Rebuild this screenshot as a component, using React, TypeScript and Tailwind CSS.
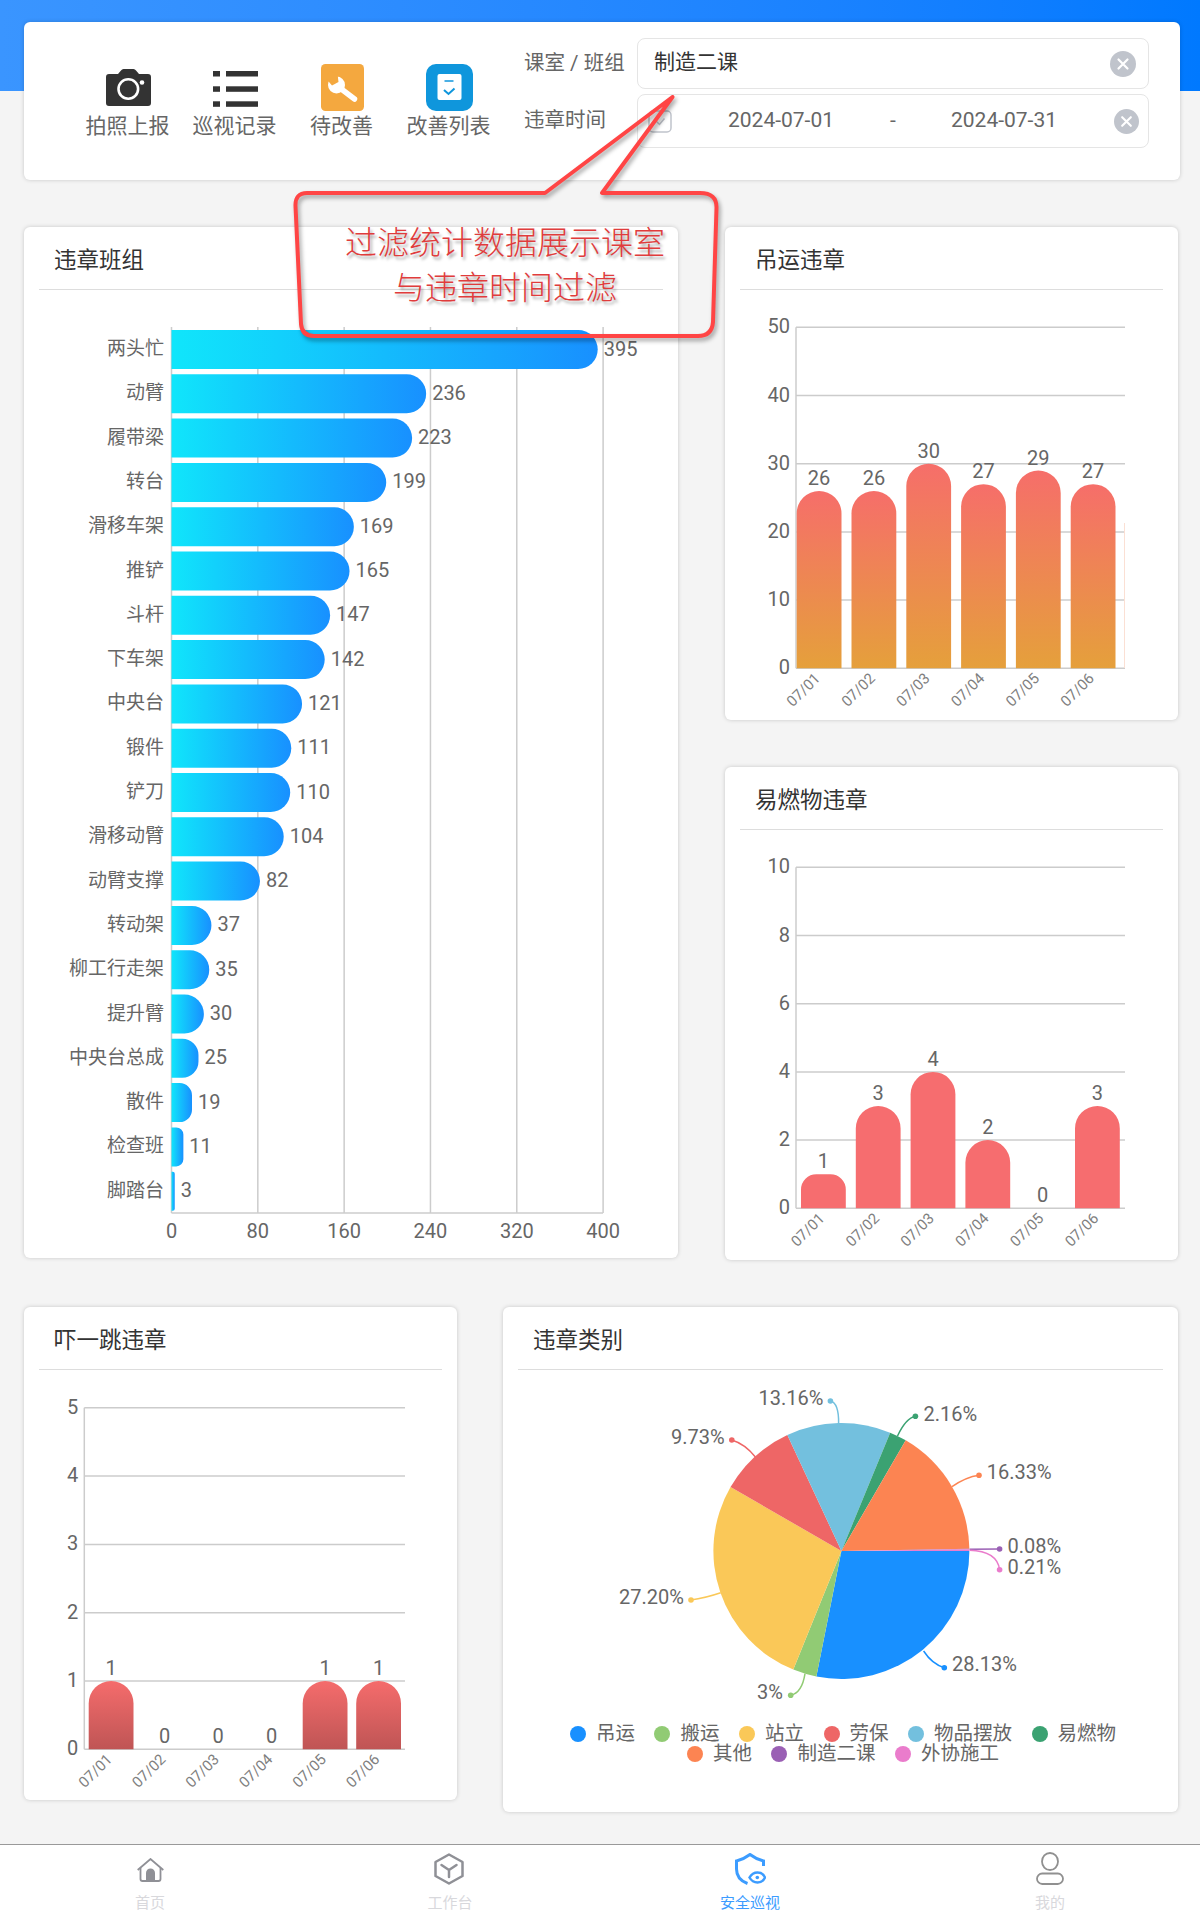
const teams: [string, number][] = [
  ["两头忙", 395], ["动臂", 236], ["履带梁", 223], ["转台", 199], ["滑移车架", 169],
  ["推铲", 165], ["斗杆", 147], ["下车架", 142], ["中央台", 121], ["锻件", 111],
  ["铲刀", 110], ["滑移动臂", 104], ["动臂支撑", 82], ["转动架", 37], ["柳工行走架", 35],
  ["提升臂", 30], ["中央台总成", 25], ["散件", 19], ["检查班", 11], ["脚踏台", 3],
];

const days = ["07/01", "07/02", "07/03", "07/04", "07/05", "07/06"];

const slices = [
  { name: "吊运", pct: 28.13, color: "#1890ff" },
  { name: "搬运", pct: 3, color: "#91cb74" },
  { name: "站立", pct: 27.2, color: "#fac858" },
  { name: "劳保", pct: 9.73, color: "#ee6666" },
  { name: "物品摆放", pct: 13.16, color: "#73c0de" },
  { name: "易燃物", pct: 2.16, color: "#3ba272" },
  { name: "其他", pct: 16.33, color: "#fc8452" },
  { name: "制造二课", pct: 0.08, color: "#9a60b4" },
  { name: "外协施工", pct: 0.21, color: "#ea7ccc" },
];

const pieLabels = [
  { text: "28.13%", x: 952, y: 1663, anchor: "start", color: "#1890ff", d: "M923.6 1650Q932 1663 944.3 1666.7" },
  { text: "3%", x: 783, y: 1691, anchor: "end", color: "#91cb74", d: "M805 1672.7Q802 1692 790.7 1694.3" },
  { text: "27.20%", x: 684, y: 1596, anchor: "end", color: "#fac858", d: "M720.7 1591.7Q705 1597 691 1599" },
  { text: "9.73%", x: 724.6, y: 1436, anchor: "end", color: "#ee6666", d: "M755.4 1456Q745 1443 731.8 1439" },
  { text: "13.16%", x: 823.5, y: 1397, anchor: "end", color: "#73c0de", d: "M838.6 1422.7Q839 1402 830.4 1400" },
  { text: "2.16%", x: 923.6, y: 1413, anchor: "start", color: "#3ba272", d: "M897.5 1435Q906 1417 915.4 1415.3" },
  { text: "16.33%", x: 986.8, y: 1471, anchor: "start", color: "#fc8452", d: "M952 1485.7Q966 1476 979 1474.3" },
  { text: "0.08%", x: 1007.5, y: 1545, anchor: "start", color: "#9a60b4", d: "M969.6 1548.3L999.6 1548" },
  { text: "0.21%", x: 1007.5, y: 1566, anchor: "start", color: "#ea7ccc", d: "M969.6 1549.3Q997 1550 999.6 1568.7" },
];

function Card({ title, className, children }: { title: string; className: string; children: React.ReactNode }) {
  return (
    <div className={`bg-white rounded-md shadow-[0_0_4px_rgba(0,0,0,0.18)] px-[15px] ${className}`}>
      <div className="h-[63px] border-b border-[#dddddd] pl-[15px] pt-[5px] flex items-center text-[22.5px] text-[#333333]">{title}</div>
      {children}
    </div>
  );
}

function topRounded(x: number, y0: number, w: number, h: number, r: number) {
  return `M${x} ${y0}V${y0 - h + r}A${r} ${r} 0 0 1 ${x + r} ${y0 - h}H${x + w - r}A${r} ${r} 0 0 1 ${x + w} ${y0 - h + r}V${y0}Z`;
}

type ColumnProps = {
  id: string;
  view: string;
  width: number;
  height: number;
  axisX: number;
  right: number;
  y0: number;
  unit: number;
  ticks: number[];
  values: number[];
  firstBar: number;
  pitch: number;
  fill: React.ReactNode;
  extra?: React.ReactNode;
};

function ColumnChart({ id, view, width, height, axisX, right, y0, unit, ticks, values, firstBar, pitch, fill, extra }: ColumnProps) {
  const barW = 44.8;
  const top = y0 - ticks[ticks.length - 1] * unit;
  return (
    <svg viewBox={view} width={width} height={height} className="block">
      <defs>{fill}</defs>
      {ticks.map((t) => (
        <g key={t}>
          <line x1={axisX} x2={right} y1={y0 - t * unit} y2={y0 - t * unit} stroke="#cccccc" strokeWidth="1.5" />
          <text x={axisX - 6} y={y0 - t * unit - 1} textAnchor="end" dominantBaseline="central" fontSize="20" fill="#666666">{t}</text>
        </g>
      ))}
      <line x1={axisX} x2={axisX} y1={top} y2={y0} stroke="#cccccc" strokeWidth="1.5" />
      {values.map((v, i) => {
        const x = firstBar + i * pitch;
        const h = v * unit;
        const cx = x + barW / 2;
        return (
          <g key={i}>
            {v > 0 && <path d={topRounded(x, y0, barW, h, Math.min(22.4, h * 0.45))} fill={`url(#${id})`} />}
            <text x={cx} y={y0 - h - 13} textAnchor="middle" dominantBaseline="central" fontSize="20" fill="#666666">{v}</text>
            <text x={cx + 2} y={y0 + 11} textAnchor="end" fontSize="15" fill="#808080" transform={`rotate(-45 ${cx + 2} ${y0 + 11})`}>{days[i]}</text>
          </g>
        );
      })}
      {extra}
    </svg>
  );
}

function TeamChart() {
  const axisX = 171.5;
  const bottom = 1213;
  const unit = 1.079;
  const pitch = 44.3;
  return (
    <svg viewBox="24 290 654 968" width={654} height={968} className="block -mx-[15px]">
      <defs>
        <linearGradient id="teamBar" x1="0" y1="0" x2="1" y2="0">
          <stop offset="0" stopColor="#10e6fb" />
          <stop offset="1" stopColor="#1890ff" />
        </linearGradient>
      </defs>
      {[0, 80, 160, 240, 320, 400].map((t) => (
        <g key={t}>
          <line x1={axisX + t * unit} x2={axisX + t * unit} y1={327} y2={bottom} stroke="#cccccc" strokeWidth="1.5" />
          <text x={axisX + t * unit} y={1231} textAnchor="middle" dominantBaseline="central" fontSize="20" fill="#666666">{t}</text>
        </g>
      ))}
      <line x1={axisX} x2={603} y1={bottom} y2={bottom} stroke="#cccccc" strokeWidth="1.5" />
      {teams.map(([name, v], i) => {
        const y = 330 + i * pitch;
        const w = v * unit;
        const r = Math.min(19.5, w * 0.6);
        return (
          <g key={name}>
            <text x={164} y={y + 18.5} textAnchor="end" dominantBaseline="central" fontSize="19" fill="#666666">{name}</text>
            <path d={`M${axisX} ${y}H${axisX + w - r}A${r} ${r} 0 0 1 ${axisX + w} ${y + r}V${y + 39 - r}A${r} ${r} 0 0 1 ${axisX + w - r} ${y + 39}H${axisX}Z`} fill="url(#teamBar)" />
            <text x={axisX + w + 6} y={y + 18.5} dominantBaseline="central" fontSize="20" fill="#666666">{v}</text>
          </g>
        );
      })}
    </svg>
  );
}

function PieChart() {
  const cx = 841.4;
  const cy = 1550;
  const r = 128;
  let acc = 0;
  return (
    <svg viewBox="503 1369 675 346" width={675} height={346} className="block -mx-[15px]">
      {slices.map((s) => {
        const a0 = (acc / 100) * Math.PI * 2;
        acc += s.pct;
        const a1 = (acc / 100) * Math.PI * 2;
        const large = a1 - a0 > Math.PI ? 1 : 0;
        return (
          <path
            key={s.name}
            d={`M${cx} ${cy}L${cx + r * Math.cos(a0)} ${cy + r * Math.sin(a0)}A${r} ${r} 0 ${large} 1 ${cx + r * Math.cos(a1)} ${cy + r * Math.sin(a1)}Z`}
            fill={s.color}
          />
        );
      })}
      {pieLabels.map((l) => {
        const end = l.d.trim().split(/[ QLM]/).slice(-2).map(Number);
        return (
          <g key={l.text}>
            <path d={l.d} fill="none" stroke={l.color} strokeWidth="1.5" />
            <circle cx={end[0]} cy={end[1]} r="2.8" fill={l.color} />
            <text x={l.x} y={l.y} textAnchor={l.anchor as "start" | "end"} dominantBaseline="central" fontSize="20" fill="#666666">{l.text}</text>
          </g>
        );
      })}
    </svg>
  );
}

function Legend({ items }: { items: typeof slices }) {
  return (
    <div className="flex justify-center gap-x-[19.5px] h-5 pl-[5px]">
      {items.map((s) => (
        <div key={s.name} className="flex items-center gap-x-[10px] text-[19.5px] leading-5 text-[#666666]">
          <span className="w-4 h-4 rounded-full" style={{ background: s.color }} />
          {s.name}
        </div>
      ))}
    </div>
  );
}

function ClearIcon({ size }: { size: number }) {
  return (
    <svg width={size} height={size} viewBox="0 0 26 26" className="shrink-0">
      <circle cx="13" cy="13" r="13" fill="#c0c4cc" />
      <path d="M8.5 8.5l9 9M17.5 8.5l-9 9" stroke="#fff" strokeWidth="2.2" strokeLinecap="round" />
    </svg>
  );
}

function ToolItem({ label, children }: { label: string; children: React.ReactNode }) {
  return (
    <div className="w-[107px] flex flex-col items-center">
      <div className="h-[47px] pl-[2px] flex items-center justify-center">{children}</div>
      <span className="mt-px text-[21px] leading-7 text-[#666666] whitespace-nowrap">{label}</span>
    </div>
  );
}

function Toolbar() {
  return (
    <div className="bg-white rounded-md shadow-[0_0_4px_rgba(0,0,0,0.18)] h-[158px] w-[1156px] flex">
      <div className="flex items-start pt-[42px] pl-[50px]">
        <ToolItem label="拍照上报">
          <svg width="45" height="37" viewBox="0 0 45 37">
            <path d="M3 5h9l3-3.5a4 4 0 0 1 2.500-1.500h10a4 4 0 0 1 2.500 1.500l3 3.500h9a3 3 0 0 1 3 3v26a3 3 0 0 1-3 3h-39a3 3 0 0 1-3-3v-26a3 3 0 0 1 3-3z" fill="#333333" />
            <circle cx="22.300" cy="20" r="9.800" fill="none" stroke="#fff" strokeWidth="2.600" />
            <circle cx="36" cy="13.500" r="2.300" fill="#fff" />
          </svg>
        </ToolItem>
        <ToolItem label="巡视记录">
          <svg width="45" height="36" viewBox="0 0 45 36" fill="#333333" className="mt-[3px]">
            <rect x="0" y="0" width="7" height="5.500" /><rect x="13" y="0" width="32" height="5.500" />
            <rect x="0" y="15.300" width="7" height="5.500" /><rect x="13" y="15.300" width="32" height="5.500" />
            <rect x="0" y="30.300" width="7" height="5.500" /><rect x="13" y="30.300" width="32" height="5.500" />
          </svg>
        </ToolItem>
        <ToolItem label="待改善">
          <svg width="43" height="47" viewBox="0 0 43 47">
            <rect width="43" height="47" rx="4.500" fill="#f4a83f" />
            <path d="M19 24l14.500 11" stroke="#fff" strokeWidth="5.500" strokeLinecap="round" />
            <circle cx="15.500" cy="21" r="8.500" fill="#fff" />
            <path d="M8 7l8.500 2.500 1 8.500-6.500 3.500-6-7z" fill="#f4a83f" />
          </svg>
        </ToolItem>
        <ToolItem label="改善列表">
          <svg width="47" height="47" viewBox="0 0 47 47">
            <rect width="47" height="47" rx="10" fill="#0f96dc" />
            <rect x="11.500" y="10" width="24" height="26" rx="2" fill="#fff" />
            <path d="M18.500 17h9" stroke="#0f96dc" strokeWidth="1.500" />
            <path d="M18 26l4.500 4 6-5.500" fill="none" stroke="#0f96dc" strokeWidth="2" />
          </svg>
        </ToolItem>
      </div>
      <div className="flex-1 pt-4 pr-[31px] pl-[22px] flex flex-col gap-[5px]">
        <div className="flex h-[51px]">
          <div className="w-[113px] pt-[11px] text-[20.5px] leading-7 text-[#666666] whitespace-nowrap">课室 / 班组</div>
          <div className="flex-1 border border-[#e5e5e5] rounded-lg flex items-center pl-4 pr-3">
            <span className="flex-1 pb-0.5 text-[21px] text-[#333333]">制造二课</span>
            <ClearIcon size={26} />
          </div>
        </div>
        <div className="flex h-[54px]">
          <div className="w-[113px] pt-3 text-[20.5px] leading-7 text-[#666666]">违章时间</div>
          <div className="flex-1 border border-[#e5e5e5] rounded-lg flex items-center pl-[10px] text-[21px] text-[#666666]">
            <svg width="24" height="23" viewBox="0 0 24 23" className="shrink-0">
              <rect x="1" y="1" width="22" height="21" rx="4" fill="none" stroke="#c0c4cc" strokeWidth="1.500" />
              <path d="M8 11l3.500 3.500 5-6" fill="none" stroke="#c0c4cc" strokeWidth="1.500" />
            </svg>
            <span className="w-[218px] pb-px text-center">2024-07-01</span>
            <span className="w-[6px] pb-px text-center">-</span>
            <span className="w-[216px] pb-px text-center">2024-07-31</span>
            <span className="ml-[2px]"><ClearIcon size={25} /></span>
          </div>
        </div>
      </div>
    </div>
  );
}

function Callout() {
  return (
    <>
      <svg className="absolute inset-0 pointer-events-none drop-shadow-[2px_3px_2px_rgba(0,0,0,0.35)]" width="1200" height="400" viewBox="0 0 1200 400">
        <path
          d="M307 193H545L672.500 97 602 193H700Q717 193 716.500 208L713 322Q712 336 698 336H314Q302 336 301 324L295.500 206Q295 193 307 193Z"
          fill="none"
          stroke="#ff4545"
          strokeWidth="4"
          strokeLinejoin="round"
        />
      </svg>
      <div className="absolute left-[296px] top-[221px] w-[418px] text-center text-[32px] leading-[45px] font-light text-[#e03c3c] [text-shadow:2px_3px_3px_rgba(0,0,0,0.35)] pointer-events-none">
        <div>过滤统计数据展示课室</div>
        <div>与违章时间过滤</div>
      </div>
    </>
  );
}

function TabItem({ label, active, children }: { label: string; active?: boolean; children: React.ReactNode }) {
  return (
    <div className="flex flex-col items-center">
      <div className="h-10 flex items-end justify-center">{children}</div>
      <span className={`mt-2 text-[15px] leading-5 ${active ? "text-[#3c9cff]" : "text-[#d8d8dc]"}`}>{label}</span>
    </div>
  );
}

function TabBar() {
  return (
    <div className="mt-auto h-[76px] bg-white border-t-[1.5px] border-[#999999] grid grid-cols-4">
      <TabItem label="首页">
        <svg width="27" height="24" viewBox="0 0 27 24" fill="none" stroke="#8f9096" strokeWidth="1.800" className="mb-[3px]">
          <path d="M.7 12L13.500 1l12.800 11" />
          <path d="M3.500 10v11a2 2 0 0 0 2 2h16a2 2 0 0 0 2-2v-11" />
          <path d="M9 23v-8a4.500 4.500 0 0 1 9 0v8z" fill="#8f9096" stroke="none" />
        </svg>
      </TabItem>
      <TabItem label="工作台">
        <svg width="30" height="32" viewBox="0 0 30 32" fill="none" stroke="#8f9096" strokeWidth="2.500" strokeLinejoin="round" strokeLinecap="round" className="-ml-[2px]">
          <path d="M15 1.500l13.500 7.500v14l-13.500 7.500-13.500-7.500v-14z" />
          <path d="M7.500 12l7.500 5 7.500-5M15 17v7" />
        </svg>
      </TabItem>
      <TabItem label="安全巡视" active>
        <svg width="31" height="32" viewBox="0 0 31 32" fill="none" stroke="#3c9cff" strokeWidth="3">
          <path d="M28.500 13V8C24 7 19 4.500 15 1.500 11 4.500 6 7 1.500 8v8c0 7 4 12 11 14.500" />
          <path d="M14.500 24.500c2-3.500 5-5 8-5s6 1.500 7.500 5c-1.500 3.500-4.500 5-7.500 5s-6-1.500-8-5z" strokeWidth="2.500" />
          <circle cx="22.300" cy="24.500" r="1.800" fill="#3c9cff" stroke="none" />
        </svg>
      </TabItem>
      <TabItem label="我的">
        <svg width="28" height="33" viewBox="0 0 28 33" fill="none" stroke="#909090" strokeWidth="1.800">
          <ellipse cx="14" cy="9.500" rx="8" ry="8.500" />
          <rect x="1" y="21.500" width="26" height="10.500" rx="5.200" />
        </svg>
      </TabItem>
    </div>
  );
}

export default function App() {
  return (
    <div className="relative w-[1200px] h-[1920px] flex flex-col bg-[#f4f4f4] bg-linear-to-r from-[#3a95ff] to-[#0079ff] bg-no-repeat [background-size:100%_91px] font-['Roboto','Noto_Sans_CJK_SC',sans-serif]">
      <div className="pt-[22px] pl-6">
        <Toolbar />
        <div className="flex gap-[47px] mt-[47px]">
          <Card title="违章班组" className="w-[654px] h-[1031px]">
            <TeamChart />
          </Card>
          <div className="w-[453px] flex flex-col gap-[47px]">
            <Card title="吊运违章" className="h-[493px]">
              <div className="-mx-[15px]">
                <ColumnChart
                  id="liftBar"
                  view="725 290 453 430"
                  width={453}
                  height={430}
                  axisX={796}
                  right={1125}
                  y0={668.3}
                  unit={6.82}
                  ticks={[0, 10, 20, 30, 40, 50]}
                  values={[26, 26, 30, 27, 29, 27]}
                  firstBar={796.7}
                  pitch={54.8}
                  fill={
                    <linearGradient id="liftBar" x1="0" y1="0" x2="0" y2="1">
                      <stop offset="0" stopColor="#f66e6a" />
                      <stop offset="1" stopColor="#e5a03b" />
                    </linearGradient>
                  }
                  extra={<line x1={1124.5} x2={1124.5} y1={523} y2={668} stroke="#fbe0d4" strokeWidth="1" />}
                />
              </div>
            </Card>
            <Card title="易燃物违章" className="h-[493px]">
              <div className="-mx-[15px]">
                <ColumnChart
                  id="fireBar"
                  view="725 830 453 430"
                  width={453}
                  height={430}
                  axisX={796}
                  right={1125}
                  y0={1208.3}
                  unit={34.1}
                  ticks={[0, 2, 4, 6, 8, 10]}
                  values={[1, 3, 4, 2, 0, 3]}
                  firstBar={801}
                  pitch={54.8}
                  fill={
                    <linearGradient id="fireBar" x1="0" y1="0" x2="0" y2="1">
                      <stop offset="0" stopColor="#f66d6f" />
                      <stop offset="1" stopColor="#f66d6f" />
                    </linearGradient>
                  }
                />
              </div>
            </Card>
          </div>
        </div>
        <div className="flex items-start gap-[46px] mt-[47px]">
          <Card title="吓一跳违章" className="w-[433px] h-[493px]">
            <div className="-mx-[15px]">
              <ColumnChart
                id="jumpBar"
                view="24 1369 433 430"
                width={433}
                height={430}
                axisX={84.3}
                right={405}
                y0={1748.3}
                unit={68.3}
                ticks={[0, 1, 2, 3, 4, 5]}
                values={[1, 0, 0, 0, 1, 1]}
                firstBar={88.7}
                pitch={53.5}
                fill={
                  <linearGradient id="jumpBar" x1="0" y1="0" x2="0" y2="1">
                    <stop offset="0" stopColor="#f56c6c" />
                    <stop offset="1" stopColor="#bf5555" />
                  </linearGradient>
                }
              />
            </div>
          </Card>
          <Card title="违章类别" className="w-[675px] h-[505px]">
            <PieChart />
            <div className="-mx-[15px] mt-2">
              <Legend items={slices.slice(0, 6)} />
              <Legend items={slices.slice(6)} />
            </div>
          </Card>
        </div>
      </div>
      <TabBar />
      <Callout />
    </div>
  );
}
